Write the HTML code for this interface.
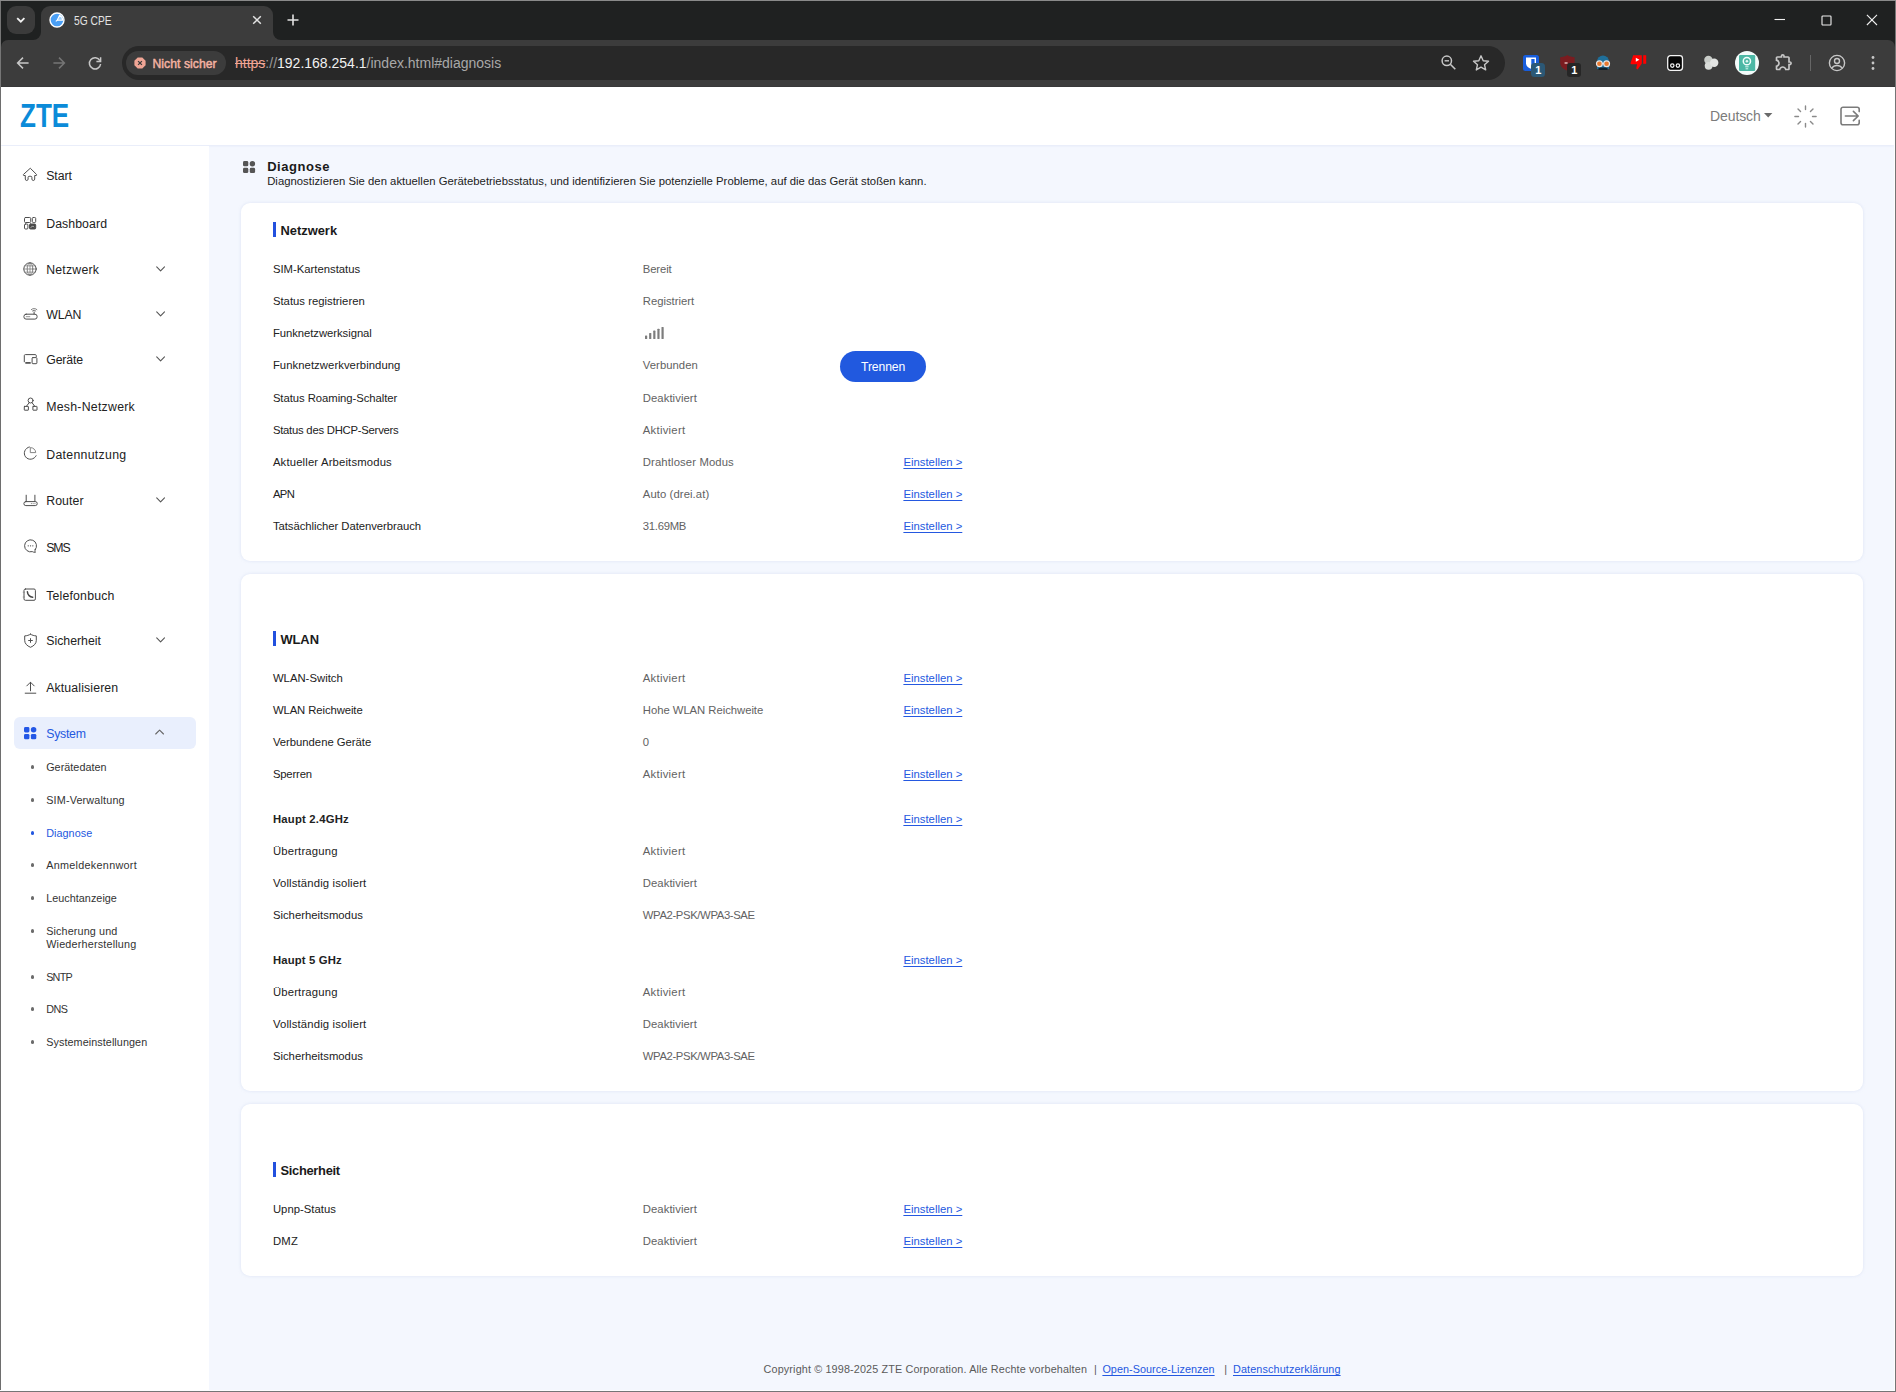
<!DOCTYPE html>
<html lang="de">
<head>
<meta charset="utf-8">
<title>5G CPE</title>
<style>

*{box-sizing:border-box;margin:0;padding:0}
html,body{width:1896px;height:1392px;overflow:hidden;background:#f4f7fe}
body{font-family:"Liberation Sans",sans-serif;color:#222}
#win{position:relative;width:1896px;height:1392px;overflow:hidden;background:#f4f7fe}
.t{position:absolute;white-space:nowrap;line-height:16px;height:16px}
.abs{position:absolute}
svg{position:absolute;overflow:visible}
a{color:inherit}
/* browser chrome */
#tabstrip{position:absolute;left:0;top:0;width:1896px;height:60px;background:#1f2121}
#toolbar{position:absolute;left:1px;top:40px;width:1894px;height:47px;background:#3c3c3c;border-radius:7px 7px 0 0;border-bottom:1px solid #343434}
#tab{position:absolute;left:41px;top:6px;width:232px;height:35px;background:#3c3c3c;border-radius:9px 9px 0 0}
.tabfoot{position:absolute;top:32px;width:8px;height:8px;background:#3c3c3c;overflow:hidden}
.tabfoot i{position:absolute;width:16px;height:16px;border-radius:8px;background:#1f2121;top:-8px}
#tabsearch{position:absolute;left:7px;top:6px;width:28px;height:28px;border-radius:9px;background:#3b3b3b}
#omni{position:absolute;left:122px;top:46px;width:1383px;height:34px;border-radius:17px;background:#282828}
#chip{position:absolute;left:126px;top:51px;width:100px;height:24px;border-radius:12px;background:#3c3c3c}
/* page */
#header{position:absolute;left:1px;top:87px;width:1893px;height:58px;background:#fff;box-shadow:0 1px 2px rgba(205,216,240,.4)}
#side{position:absolute;left:1px;top:146px;width:208px;height:1244px;background:#fff}
.card{position:absolute;left:241px;width:1622px;background:#fff;border-radius:9px;box-shadow:0 0 3px rgba(196,208,236,.5)}
.m{color:#222}
.sub{color:#333}
.lab{color:#222}
.val{color:#626262}
.lnk{color:#2458e0;text-decoration:underline;text-underline-offset:1.5px;text-decoration-thickness:1px}
.blue{color:#2458e0}
.b{font-weight:700}
.bar{position:absolute;left:273px;width:3px;height:14px;background:#2250de}
</style>
</head>
<body>
<div id="win">
<div id="tabstrip"></div>
<div class="abs" style="left:0;top:0;width:1896px;height:1px;background:#8a8a8a"></div>
<div id="tabsearch"></div>
<svg style="left:7px;top:6px" width="28" height="28" viewBox="0 0 28 28"><path d="M10.200 12.100l3.600 3.600 3.600-3.600" fill="none" stroke="#f0f0f0" stroke-width="1.800"/></svg>
<div id="tab"></div>
<div class="tabfoot" style="left:33px"><i style="left:-8px"></i></div>
<div class="tabfoot" style="left:273px"><i style="left:0"></i></div>
<svg style="left:49px;top:12px" width="16" height="16" viewBox="0 0 16 16"><circle cx="8" cy="8" r="7" fill="#4a9ff5" stroke="#fff" stroke-width="1.4"/><path d="M8.2 8.3L10.6 3.2A5.6 5.6 0 0 1 13.6 8.3Z" fill="#9fd0ff" stroke="#fff" stroke-width="1.1" stroke-linejoin="round"/><path d="M6.8 9.4l1.6-1.3" stroke="#fff" stroke-width="1.1"/></svg>
<div class="t " style="left:73.7px;top:13px;font-size:12.3px;transform:scaleX(0.8334);transform-origin:0 0;color:#e3e3e3;">5G CPE</div><svg style="left:252px;top:15px" width="10" height="10" viewBox="0 0 10 10"><path d="M1.2 1.2l7.6 7.6M8.8 1.2l-7.6 7.6" stroke="#e3e3e3" stroke-width="1.5" fill="none"/></svg>
<svg style="left:287px;top:14px" width="12" height="12" viewBox="0 0 12 12"><path d="M6 0.5v11M0.5 6h11" stroke="#e3e3e3" stroke-width="1.6" fill="none"/></svg>
<svg style="left:1774px;top:14px" width="12" height="12" viewBox="0 0 12 12"><path d="M0.5 5.5h10.5" stroke="#f0f0f0" stroke-width="1.1" fill="none"/></svg>
<svg style="left:1820.550px;top:14.550px" width="12" height="12" viewBox="0 0 12 12"><rect x="1" y="1" width="9" height="9" rx=".8" stroke="#f0f0f0" stroke-width="1.100" fill="none"/></svg>
<svg style="left:1866px;top:14.100px" width="12" height="12" viewBox="0 0 12 12"><path d="M0.900 0.900l10.100 10.100M11 0.900l-10.100 10.100" stroke="#f0f0f0" stroke-width="1.1" fill="none"/></svg>
<div id="toolbar"></div>
<div class="abs" style="left:0;top:1px;width:1px;height:86px;background:#767676"></div>
<div class="abs" style="left:1895px;top:1px;width:1px;height:86px;background:#767676"></div>
<svg style="left:16px;top:56px" width="14" height="14" viewBox="0 0 14 14"><path d="M12.6 7H2M7 1.6L1.6 7 7 12.4" fill="none" stroke="#c7c7c7" stroke-width="1.5" stroke-linejoin="miter"/></svg>
<svg style="left:52px;top:56px" width="14" height="14" viewBox="0 0 14 14"><path d="M1.4 7H12M7 1.6L12.4 7 7 12.4" fill="none" stroke="#757575" stroke-width="1.5"/></svg>
<svg style="left:88px;top:56px" width="14" height="14" viewBox="0 0 14 14"><path d="M11.9 4.6A5.6 5.6 0 1 0 12.6 8" fill="none" stroke="#c7c7c7" stroke-width="1.5"/><path d="M12.6 1.2v4.2H8.4" fill="none" stroke="#c7c7c7" stroke-width="1.5"/></svg>
<div id="omni"></div><div id="chip"></div>
<svg style="left:134px;top:57px" width="12" height="12" viewBox="0 0 12 12"><path d="M3.7 0.4h4.6l3.3 3.3v4.6l-3.3 3.3H3.7L0.4 8.3V3.7Z" fill="#f0a595"/><path d="M4.1 4.1l3.8 3.8M7.9 4.1l-3.8 3.8" stroke="#3c3c3c" stroke-width="1.3"/></svg>
<div class="t " style="left:152.5px;top:55.5px;font-size:12.2px;letter-spacing:0.043px;color:#f5b3a3;-webkit-text-stroke:.45px #f5b3a3;">Nicht sicher</div><div class="t " style="left:235px;top:55px;font-size:14px;"><span style="color:#f0a595;text-decoration:line-through">https</span><span style="color:#9a9a9a">://</span><span style="color:#f1f1f1">192.168.254.1</span><span style="color:#a8a8a8">/index.html#diagnosis</span></div><svg style="left:1440px;top:54px" width="18" height="18" viewBox="0 0 18 18"><circle cx="6.8" cy="6.8" r="4.7" fill="none" stroke="#c7c7c7" stroke-width="1.5"/><path d="M10.3 10.3l5 5" stroke="#c7c7c7" stroke-width="1.6"/><path d="M4.6 6.8h4.4" stroke="#c7c7c7" stroke-width="1.4"/></svg>
<svg style="left:1472px;top:54px" width="18" height="18" viewBox="0 0 18 18"><path d="M9 1.8l2.2 4.9 5.3.5-4 3.5 1.2 5.2L9 13.2l-4.7 2.7 1.2-5.2-4-3.5 5.3-.5Z" fill="none" stroke="#c7c7c7" stroke-width="1.4" stroke-linejoin="round"/></svg>
<svg style="left:1523px;top:55px" width="24" height="24" viewBox="0 0 24 24"><rect x="0" y="0" width="16" height="16" rx="2.5" fill="#175ddc"/><path d="M3 2.6h10v5.6c0 2.8-2.4 4.6-5 5.6-2.6-1-5-2.8-5-5.6Z" fill="#fff"/><path d="M8.300 4h3.300v4.200c0 1.900-1.500 3.200-3.300 4Z" fill="#175ddc"/><rect x="8" y="8" width="14" height="14" rx="3.5" fill="#2b5876"/></svg>
<div class="t b" style="left:1535.3px;top:62px;font-size:11px;color:#fff;">1</div><svg style="left:1559px;top:54px" width="24" height="24" viewBox="0 0 24 24"><path d="M8.4 1c2 1.4 4.4 2 7.2 2.2v5.6c0 3.6-3 6.4-7.2 8-4.200-1.6-7.2-4.4-7.2-8V3.200C4 3 6.400 2.400 8.400 1Z" fill="#7a1c20"/><path d="M5.600 9h3" stroke="#d9b0b0" stroke-width="1.6"/><rect x="8" y="9" width="14" height="14" rx="3" fill="#262626"/></svg>
<div class="t b" style="left:1571.3px;top:62px;font-size:11px;color:#fff;">1</div><svg style="left:1594px;top:54px" width="18" height="18" viewBox="0 0 18 18"><path d="M3 7.500a6 6 0 0 1 12 0v7.500h-12Z" fill="#1f6f9a"/><path d="M4.500 13.500h9v2.500h-9Z" fill="#10202a"/><circle cx="5.400" cy="9.800" r="2.900" fill="#e8792f" stroke="#e6e6e6" stroke-width="1.200"/><circle cx="12.600" cy="9.800" r="2.900" fill="#e8792f" stroke="#e6e6e6" stroke-width="1.200"/><path d="M8.200 9.600h1.600" stroke="#e6e6e6" stroke-width="1.100"/></svg>
<svg style="left:1630px;top:54px" width="18" height="18" viewBox="0 0 18 18"><path d="M3.200 1.200h8.600v8.400l-4.200 5.800-1.400-1 .9-4.200H1.400c-.6 0-1-.5-.8-1.100Z" fill="#f00"/><rect x="13.200" y="1.200" width="3" height="8.600" fill="#f00"/><path d="M5.800 3.700l3.600 2-3.600 2Z" fill="#fff"/></svg>
<svg style="left:1667px;top:55px" width="17" height="17" viewBox="0 0 17 17"><rect x=".7" y=".7" width="14.800" height="14.600" rx="2.800" fill="#050505" stroke="#f4f4f4" stroke-width="1.300"/><circle cx="5.300" cy="10.600" r="1.700" fill="none" stroke="#f4f4f4" stroke-width="1.200"/><circle cx="10.900" cy="10.600" r="1.700" fill="none" stroke="#f4f4f4" stroke-width="1.200"/></svg>
<svg style="left:1702px;top:54px" width="18" height="18" viewBox="0 0 18 18"><circle cx="6.400" cy="6" r="4.200" fill="#c9cdc9"/><circle cx="6.600" cy="11.800" r="3.900" fill="#d9dcd9"/><circle cx="12.200" cy="8.800" r="4.200" fill="#e3e5e3"/></svg>
<svg style="left:1735px;top:51px" width="24" height="24" viewBox="0 0 24 24"><circle cx="12" cy="12" r="12" fill="#f3fbfa"/><rect x="4" y="4" width="16.200" height="16" rx="1.200" fill="#4cb8a5"/><circle cx="11.900" cy="10.200" r="3.600" fill="none" stroke="#f2fffc" stroke-width="1.500"/><circle cx="11.900" cy="10.200" r="1.300" fill="#dff5f0"/><path d="M10.200 15.800h3.400M10.600 17.800h2.600" stroke="#e6faf6" stroke-width=".9"/></svg>
<svg style="left:1774.200px;top:51.800px" width="20" height="20" viewBox="0 0 24 24"><path fill="#c7c7c7" d="M10.500 4.500c.28 0 .5.22.5.5v2h6v6h2c.28 0 .5.22.5.5s-.22.5-.5.5h-2v6h-2.120c-.68-1.750-2.390-3-4.380-3s-3.700 1.250-4.380 3H4v-2.120c1.750-.68 3-2.390 3-4.380 0-1.990-1.240-3.700-2.990-4.380L4 7h6V5c0-.28.22-.5.5-.5m0-2C9.120 2.500 8 3.620 8 5H4c-1.100 0-1.990.9-1.990 2v3.800h.29c1.490 0 2.700 1.210 2.700 2.700s-1.210 2.700-2.700 2.700H2V20c0 1.100.9 2 2 2h3.800v-.3c0-1.490 1.210-2.700 2.700-2.700s2.700 1.210 2.700 2.700v.3H17c1.100 0 2-.9 2-2v-4c1.380 0 2.500-1.120 2.500-2.500S20.380 11 19 11V7c0-1.100-.9-2-2-2h-4c0-1.380-1.120-2.500-2.500-2.500z"/></svg>
<div class="abs" style="left:1809.600px;top:55px;width:1.200px;height:16px;background:#666"></div>
<svg style="left:1828px;top:54px" width="18" height="18" viewBox="0 0 18 18"><circle cx="9" cy="9" r="7.600" fill="none" stroke="#c7c7c7" stroke-width="1.400"/><circle cx="9" cy="7" r="2.500" fill="none" stroke="#c7c7c7" stroke-width="1.400"/><path d="M3.800 14.200c1.300-2 3.200-2.700 5.200-2.700s3.900.7 5.200 2.700" fill="none" stroke="#c7c7c7" stroke-width="1.400"/></svg>
<svg style="left:1871px;top:55px" width="4" height="16" viewBox="0 0 4 16"><circle cx="2" cy="2.500" r="1.400" fill="#c7c7c7"/><circle cx="2" cy="8" r="1.400" fill="#c7c7c7"/><circle cx="2" cy="13.500" r="1.400" fill="#c7c7c7"/></svg>
<div id="header"></div>
<div id="side"></div>
<div class="abs" style="left:0;top:87px;width:1px;height:1305px;background:#6e6e6e"></div>
<div class="abs" style="left:1894px;top:87px;width:1px;height:1304px;background:#fdfdfe"></div><div class="abs" style="left:1895px;top:87px;width:1px;height:1305px;background:#757575"></div>
<div class="abs" style="left:0;top:1390px;width:1895px;height:1px;background:#fdfdfe"></div><div class="abs" style="left:0;top:1391px;width:1896px;height:1px;background:#757575"></div>
<div class="t b" style="left:19.5px;top:96px;height:40px;line-height:40px;font-size:33.6px;color:#0b8bd9;transform:scaleX(.775);transform-origin:0 0;letter-spacing:0px">ZTE</div>
<div class="t " style="left:1710px;top:108px;font-size:14px;letter-spacing:-0.093px;color:#7b7b7b;">Deutsch</div><svg style="left:1764px;top:113px" width="8.4" height="4.4" viewBox="0 0 8.4 4.4"><path d="M0 0h8.400L4.200 4.400Z" fill="#6a6a6a"/></svg>
<svg style="left:1793.8px;top:104.5px" width="23" height="23" viewBox="0 0 23 23" fill="none" stroke="#8a8a8a" stroke-width="1.4" stroke-linecap="round"><path d="M11.50 4.50L11.50 0.90"/><path d="M16.45 6.55L19.00 4.00"/><path d="M18.50 11.50L22.10 11.50"/><path d="M16.45 16.45L19.00 19.00"/><path d="M11.50 18.50L11.50 22.10"/><path d="M6.55 16.45L4.00 19.00"/><path d="M4.50 11.50L0.90 11.50"/><path d="M6.55 6.55L4.00 4.00"/></svg>
<svg style="left:1840px;top:106px" width="21" height="21" viewBox="0 0 21 21" fill="none" stroke="#7b7b7b" stroke-width="1.6" stroke-linecap="round" stroke-linejoin="round"><path d="M19.200 5.600V3.200a2 2 0 0 0-2-2H3a2 2 0 0 0-2 2v13.600a2 2 0 0 0 2 2h14.200a2 2 0 0 0 2-2v-2.400"/><path d="M5.400 10h12.600M13.400 5.400L18.200 10l-4.800 4.600"/></svg>
<div class="t m" style="left:46.2px;top:168px;font-size:12.3px;letter-spacing:-0.069px;">Start</div><div class="t m" style="left:46.2px;top:216px;font-size:12.3px;letter-spacing:0.078px;">Dashboard</div><div class="t m" style="left:46.2px;top:262px;font-size:12.3px;letter-spacing:0.220px;">Netzwerk</div><svg style="left:155.7px;top:265.5px" width="9.2" height="6" viewBox="0 0 9.2 6" fill="none" stroke="#555" stroke-width="1.1" stroke-linecap="round" stroke-linejoin="round"><path d="M0.7 0.9l3.9 3.9 3.9-3.9"/></svg>
<div class="t m" style="left:46.2px;top:307px;font-size:12.3px;letter-spacing:-0.079px;">WLAN</div><svg style="left:155.7px;top:310.5px" width="9.2" height="6" viewBox="0 0 9.2 6" fill="none" stroke="#555" stroke-width="1.1" stroke-linecap="round" stroke-linejoin="round"><path d="M0.7 0.9l3.9 3.9 3.9-3.9"/></svg>
<div class="t m" style="left:46.2px;top:352px;font-size:12.3px;letter-spacing:-0.121px;">Geräte</div><svg style="left:155.7px;top:355.5px" width="9.2" height="6" viewBox="0 0 9.2 6" fill="none" stroke="#555" stroke-width="1.1" stroke-linecap="round" stroke-linejoin="round"><path d="M0.7 0.9l3.9 3.9 3.9-3.9"/></svg>
<div class="t m" style="left:46.2px;top:399px;font-size:12.3px;letter-spacing:0.264px;">Mesh-Netzwerk</div><div class="t m" style="left:46.2px;top:447px;font-size:12.3px;letter-spacing:0.310px;">Datennutzung</div><div class="t m" style="left:46.2px;top:493px;font-size:12.3px;letter-spacing:0.096px;">Router</div><svg style="left:155.7px;top:496.5px" width="9.2" height="6" viewBox="0 0 9.2 6" fill="none" stroke="#555" stroke-width="1.1" stroke-linecap="round" stroke-linejoin="round"><path d="M0.7 0.9l3.9 3.9 3.9-3.9"/></svg>
<div class="t m" style="left:46.2px;top:540px;font-size:12.3px;letter-spacing:-1.078px;">SMS</div><div class="t m" style="left:46.2px;top:588px;font-size:12.3px;letter-spacing:0.186px;">Telefonbuch</div><div class="t m" style="left:46.2px;top:633px;font-size:12.3px;letter-spacing:0.011px;">Sicherheit</div><svg style="left:155.7px;top:636.5px" width="9.2" height="6" viewBox="0 0 9.2 6" fill="none" stroke="#555" stroke-width="1.1" stroke-linecap="round" stroke-linejoin="round"><path d="M0.7 0.9l3.9 3.9 3.9-3.9"/></svg>
<div class="t m" style="left:46.2px;top:680px;font-size:12.3px;letter-spacing:0.132px;">Aktualisieren</div><svg style="left:22px;top:167px" width="16" height="15" viewBox="0 0 16 15" fill="none" stroke="#4e4e4e" stroke-width="1" stroke-linecap="round" stroke-linejoin="round"><path d="M8 1.5L1.500 7.400c-.5.500-.2 1.100.4 1.100H3.300v3.600c0 .9.600 1.400 1.400 1.400s1.400-.5 1.400-1.400V10.300c0-.6.400-1 1-1h1.800c.6 0 1 .4 1 1v1.800c0 .9.600 1.400 1.400 1.400s1.400-.5 1.400-1.400V8.500h1.400c.6 0 .9-.6.400-1.100Z"/></svg>
<svg style="left:23px;top:216px" width="14" height="14" viewBox="0 0 14 14" fill="none" stroke="#4e4e4e" stroke-width="1" stroke-linecap="round" stroke-linejoin="round"><rect x="1.500" y="1.500" width="6.200" height="5" rx="1"/><rect x="9.300" y="1.500" width="3.400" height="5" rx="1"/><rect x="1.500" y="8" width="3.400" height="5" rx="1"/><rect x="6.500" y="8" width="6.200" height="5" rx="1" fill="#474747"/><path d="M8 11.500l1.600-1.600 1 1" stroke="#ddd" stroke-width=".8"/></svg>
<svg style="left:23px;top:262px" width="14" height="14" viewBox="0 0 14 14" fill="none" stroke="#4e4e4e" stroke-width="1" stroke-linecap="round" stroke-linejoin="round"><circle cx="7" cy="7" r="6.200"/><ellipse cx="7" cy="7" rx="2.800" ry="6.200" stroke-width=".8" stroke="#666"/><path d="M0.800 7h12.400M7 .8v12.400M1.900 3.900h10.200M1.900 10.100h10.200" stroke-width=".75" stroke="#777"/></svg>
<svg style="left:22.5px;top:307px" width="15" height="13.5" viewBox="0 0 15 13.5" fill="none" stroke="#4e4e4e" stroke-width="1" stroke-linecap="round" stroke-linejoin="round"><rect x=".9" y="7.200" width="13.200" height="4.900" rx="2.200"/><path d="M11.100 7.200V4.900"/><path d="M9.400 3.900a2.500 2.500 0 0 1 3.400 0M8.300 2.600a4 4 0 0 1 5.600 0" stroke-width=".85" stroke="#666"/><path d="M3.200 9.700h3.600" stroke-width=".9" stroke="#888"/></svg>
<svg style="left:22.5px;top:353px" width="15" height="12" viewBox="0 0 15 12" fill="none" stroke="#4e4e4e" stroke-width="1" stroke-linecap="round" stroke-linejoin="round"><path d="M1.300 8.800V2.600c0-.6.400-1 1-1h10c.6 0 1 .4 1 1v.9"/><rect x="9.100" y="4.600" width="4.800" height="6.100" rx=".8"/><path d="M2.300 9.900h5.400" stroke-width="1.700" stroke-linecap="butt"/></svg>
<svg style="left:22.5px;top:397.3px" width="15" height="14.5" viewBox="0 0 15 14.5" fill="none" stroke="#4e4e4e" stroke-width="1" stroke-linecap="round" stroke-linejoin="round"><circle cx="7.600" cy="3.500" r="2.500"/><path d="M6.200 5.700L3.600 9M9 5.700L11.600 9"/><rect x="1.300" y="9.400" width="4.100" height="3.800" rx=".3" stroke-linejoin="miter"/><rect x="9.900" y="9.400" width="4.100" height="3.800" rx=".3" stroke-linejoin="miter"/></svg>
<svg style="left:22.5px;top:446.3px" width="15" height="14.5" viewBox="0 0 15 14.5" fill="none" stroke="#4e4e4e" stroke-width="1" stroke-linecap="round" stroke-linejoin="round"><path d="M6.420 1A6.200 6.200 0 1 0 13.120 9.720"/><path d="M7.700 1.600A5 5 0 0 1 12.700 6.600H7.700Z" stroke="#777" stroke-width=".9"/></svg>
<svg style="left:22.5px;top:493.5px" width="15" height="12.5" viewBox="0 0 15 12.5" fill="none" stroke="#4e4e4e" stroke-width="1" stroke-linecap="round" stroke-linejoin="round"><rect x=".9" y="7.600" width="13.300" height="4" rx="1.900"/><path d="M3.200 7.600V1.200M11.900 7.600V1.200"/><path d="M8.300 9.600h.1M10.100 9.600h.1M11.900 9.600h.1" stroke-width="1" stroke="#777"/></svg>
<svg style="left:22.5px;top:539.3px" width="15" height="14" viewBox="0 0 15 14" fill="none" stroke="#4e4e4e" stroke-width="1" stroke-linecap="round" stroke-linejoin="round"><path d="M12.200 10.700A6 6 0 1 0 9.300 12.600c.8.500 1.800.8 3.100.7-.5-.7-.6-1.700-.2-2.600Z"/><path d="M5.200 6.800h.1M7.500 6.800h.1M9.800 6.800h.1" stroke-width="1.200"/></svg>
<svg style="left:22.2px;top:587.7px" width="15" height="13.5" viewBox="0 0 15 13.5" fill="none" stroke="#4e4e4e" stroke-width="1" stroke-linecap="round" stroke-linejoin="round"><rect x="2" y="1" width="11.400" height="11.300" rx="1.400"/><path d="M1.200 4.200h1.400M1.200 9h1.400" stroke-width=".9" stroke="#888"/><path d="M5.400 3.700c.1 1.600.7 2.900 1.700 3.900s2.200 1.500 3.600 1.600" stroke-width="1.500" stroke="#444"/></svg>
<svg style="left:22.5px;top:632.5px" width="15" height="15.5" viewBox="0 0 15 15.5" fill="none" stroke="#4e4e4e" stroke-width="1" stroke-linecap="round" stroke-linejoin="round"><path d="M7.500 1.200c1.600 1 3.600 1.600 5.800 1.700v4.500c0 3.100-2.200 5.400-5.800 6.900-3.600-1.500-5.800-3.800-5.800-6.900V2.900c2.200-.1 4.200-.7 5.800-1.700Z"/><path d="M7.500 5.600v3.800M5.600 7.500h3.800" stroke-width="1"/></svg>
<svg style="left:22.5px;top:680.5px" width="15" height="13.5" viewBox="0 0 15 13.5" fill="none" stroke="#4e4e4e" stroke-width="1" stroke-linecap="round" stroke-linejoin="round"><path d="M7.500 9.800V1.300M3.800 4.900L7.500 1.200l3.700 3.700M2.200 12.200h10.600"/></svg>
<div class="abs" style="left:14px;top:717px;width:182px;height:32px;border-radius:6px;background:#e9effd"></div>
<svg style="left:23.800px;top:727px" width="12.400" height="12.400" viewBox="0 0 12.400 12.400"><rect x="0" y="0" width="5.400" height="5.400" rx="1.400" fill="#2357e6"/><circle cx="9.600" cy="2.700" r="2.750" fill="#2357e6"/><rect x="0" y="6.900" width="5.400" height="5.400" rx="1.400" fill="#2357e6"/><rect x="6.900" y="6.900" width="5.400" height="5.400" rx="1.400" fill="#2357e6"/></svg>
<div class="t blue" style="left:46.2px;top:726px;font-size:12.3px;letter-spacing:-0.262px;">System</div><svg style="left:154.9px;top:729px" width="9.2" height="6" viewBox="0 0 9.2 6" fill="none" stroke="#666" stroke-width="1.1" stroke-linecap="round" stroke-linejoin="round"><path d="M0.7 5l3.9-3.9 3.9 3.9"/></svg>
<div class="abs" style="left:30.600px;top:765.2px;width:3.600px;height:3.600px;border-radius:2px;background:#6b6b6b"></div><div class="t sub" style="left:46.2px;top:759px;font-size:10.8px;letter-spacing:0.036px;">Gerätedaten</div><div class="abs" style="left:30.600px;top:798.2px;width:3.600px;height:3.600px;border-radius:2px;background:#6b6b6b"></div><div class="t sub" style="left:46.2px;top:792px;font-size:10.8px;letter-spacing:0.166px;">SIM-Verwaltung</div><div class="abs" style="left:30.600px;top:831.2px;width:3.600px;height:3.600px;border-radius:2px;background:#2458e0"></div><div class="t blue" style="left:46.2px;top:825px;font-size:10.8px;letter-spacing:0.052px;">Diagnose</div><div class="abs" style="left:30.600px;top:863.2px;width:3.600px;height:3.600px;border-radius:2px;background:#6b6b6b"></div><div class="t sub" style="left:46.2px;top:857px;font-size:10.8px;letter-spacing:0.296px;">Anmeldekennwort</div><div class="abs" style="left:30.600px;top:896.2px;width:3.600px;height:3.600px;border-radius:2px;background:#6b6b6b"></div><div class="t sub" style="left:46.2px;top:890px;font-size:10.8px;letter-spacing:0.037px;">Leuchtanzeige</div><div class="abs" style="left:30.600px;top:929.2px;width:3.600px;height:3.600px;border-radius:2px;background:#6b6b6b"></div><div class="t sub" style="left:46.2px;top:923px;font-size:10.8px;letter-spacing:0.129px;">Sicherung und</div><div class="abs" style="left:30.600px;top:975.2px;width:3.600px;height:3.600px;border-radius:2px;background:#6b6b6b"></div><div class="t sub" style="left:46.2px;top:969px;font-size:10.8px;letter-spacing:-0.768px;">SNTP</div><div class="abs" style="left:30.600px;top:1007.2px;width:3.600px;height:3.600px;border-radius:2px;background:#6b6b6b"></div><div class="t sub" style="left:46.2px;top:1001px;font-size:10.8px;letter-spacing:-0.502px;">DNS</div><div class="abs" style="left:30.600px;top:1040.2px;width:3.600px;height:3.600px;border-radius:2px;background:#6b6b6b"></div><div class="t sub" style="left:46.2px;top:1034px;font-size:10.8px;letter-spacing:0.074px;">Systemeinstellungen</div><div class="t sub" style="left:46.2px;top:936px;font-size:10.8px;letter-spacing:0.191px;">Wiederherstellung</div><svg style="left:243px;top:161px" width="12.200" height="12.200" viewBox="0 0 12.200 12.200"><rect x="0" y="0" width="5.300" height="5.300" rx="1.400" fill="#555"/><circle cx="9.400" cy="2.700" r="2.700" fill="#555"/><rect x="0" y="6.800" width="5.300" height="5.300" rx="1.400" fill="#555"/><rect x="6.800" y="6.800" width="5.300" height="5.300" rx="1.400" fill="#555"/></svg>
<div class="t b" style="left:267.2px;top:158.5px;font-size:13px;letter-spacing:0.527px;color:#1a1a1a;">Diagnose</div><div class="t lab" style="left:267.2px;top:173px;font-size:11.3px;letter-spacing:0.019px;">Diagnostizieren Sie den aktuellen Gerätebetriebsstatus, und identifizieren Sie potenzielle Probleme, auf die das Gerät stoßen kann.</div><div class="card" style="top:203px;height:358px"></div>
<div class="card" style="top:574px;height:517px"></div>
<div class="card" style="top:1104px;height:172px"></div>
<div class="bar" style="top:222px;height:15px"></div><div class="t b" style="left:280.4px;top:222.5px;font-size:12.9px;letter-spacing:0.009px;color:#1a1a1a;">Netzwerk</div><div class="t lab" style="left:272.9px;top:261px;font-size:11.3px;">SIM-Kartenstatus</div><div class="t val" style="left:642.8px;top:261px;font-size:11.3px;letter-spacing:-0.124px;">Bereit</div><div class="t lab" style="left:272.9px;top:293px;font-size:11.3px;letter-spacing:0.011px;">Status registrieren</div><div class="t val" style="left:642.8px;top:293px;font-size:11.3px;letter-spacing:-0.019px;">Registriert</div><div class="t lab" style="left:272.9px;top:325px;font-size:11.3px;letter-spacing:-0.051px;">Funknetzwerksignal</div><svg style="left:644.700px;top:326.600px" width="19" height="12" viewBox="0 0 19 12" fill="#7d7d7d"><rect x="0" y="8.4" width="2.200" height="3.6" rx=".6"/><rect x="4.12" y="5.9" width="2.200" height="6.1" rx=".6"/><rect x="8.24" y="3.6" width="2.200" height="8.4" rx=".6"/><rect x="12.36" y="1.7" width="2.200" height="10.3" rx=".6"/><rect x="16.48" y="0" width="2.200" height="12" rx=".6"/></svg>
<div class="t lab" style="left:272.9px;top:357px;font-size:11.3px;letter-spacing:0.059px;">Funknetzwerkverbindung</div><div class="t val" style="left:642.8px;top:357px;font-size:11.3px;letter-spacing:0.041px;">Verbunden</div><div class="abs" style="left:840px;top:351px;width:86px;height:31px;border-radius:16px;background:#2159df"></div><div class="t " style="left:861px;top:359px;font-size:12.2px;letter-spacing:-0.115px;color:#fff;">Trennen</div><div class="t lab" style="left:272.9px;top:390px;font-size:11.3px;letter-spacing:-0.051px;">Status Roaming-Schalter</div><div class="t val" style="left:642.8px;top:390px;font-size:11.3px;letter-spacing:0.062px;">Deaktiviert</div><div class="t lab" style="left:272.9px;top:422px;font-size:11.3px;letter-spacing:-0.243px;">Status des DHCP-Servers</div><div class="t val" style="left:642.8px;top:422px;font-size:11.3px;letter-spacing:0.264px;">Aktiviert</div><div class="t lab" style="left:272.9px;top:454px;font-size:11.3px;letter-spacing:0.159px;">Aktueller Arbeitsmodus</div><div class="t val" style="left:642.8px;top:454px;font-size:11.3px;letter-spacing:0.121px;">Drahtloser Modus</div><a class="t lnk" style="left:903.4px;top:454px;font-size:11.3px;letter-spacing:0.015px;">Einstellen &gt;</a><div class="t lab" style="left:272.9px;top:486px;font-size:11.3px;letter-spacing:-0.568px;">APN</div><div class="t val" style="left:642.8px;top:486px;font-size:11.3px;letter-spacing:0.083px;">Auto (drei.at)</div><a class="t lnk" style="left:903.4px;top:486px;font-size:11.3px;letter-spacing:0.015px;">Einstellen &gt;</a><div class="t lab" style="left:272.9px;top:518px;font-size:11.3px;letter-spacing:-0.048px;">Tatsächlicher Datenverbrauch</div><div class="t val" style="left:642.8px;top:518px;font-size:11.3px;letter-spacing:-0.272px;">31.69MB</div><a class="t lnk" style="left:903.4px;top:518px;font-size:11.3px;letter-spacing:0.015px;">Einstellen &gt;</a><div class="bar" style="top:631px;height:15px"></div><div class="t b" style="left:280.4px;top:631.5px;font-size:12.9px;letter-spacing:-0.029px;color:#1a1a1a;">WLAN</div><div class="t lab" style="left:272.9px;top:670px;font-size:11.3px;letter-spacing:0.021px;">WLAN-Switch</div><div class="t val" style="left:642.8px;top:670px;font-size:11.3px;letter-spacing:0.264px;">Aktiviert</div><a class="t lnk" style="left:903.4px;top:670px;font-size:11.3px;letter-spacing:0.015px;">Einstellen &gt;</a><div class="t lab" style="left:272.9px;top:702px;font-size:11.3px;letter-spacing:-0.090px;">WLAN Reichweite</div><div class="t val" style="left:642.8px;top:702px;font-size:11.3px;letter-spacing:-0.038px;">Hohe WLAN Reichweite</div><a class="t lnk" style="left:903.4px;top:702px;font-size:11.3px;letter-spacing:0.015px;">Einstellen &gt;</a><div class="t lab" style="left:272.9px;top:734px;font-size:11.3px;letter-spacing:-0.015px;">Verbundene Geräte</div><div class="t val" style="left:642.8px;top:734px;font-size:11.3px;">0</div><div class="t lab" style="left:272.9px;top:766px;font-size:11.3px;letter-spacing:-0.167px;">Sperren</div><div class="t val" style="left:642.8px;top:766px;font-size:11.3px;letter-spacing:0.264px;">Aktiviert</div><a class="t lnk" style="left:903.4px;top:766px;font-size:11.3px;letter-spacing:0.015px;">Einstellen &gt;</a><div class="t lab b" style="left:272.9px;top:811px;font-size:11.3px;letter-spacing:0.222px;">Haupt 2.4GHz</div><a class="t lnk" style="left:903.4px;top:811px;font-size:11.3px;letter-spacing:0.015px;">Einstellen &gt;</a><div class="t lab" style="left:272.9px;top:843px;font-size:11.3px;letter-spacing:0.178px;">Übertragung</div><div class="t val" style="left:642.8px;top:843px;font-size:11.3px;letter-spacing:0.264px;">Aktiviert</div><div class="t lab" style="left:272.9px;top:875px;font-size:11.3px;letter-spacing:0.155px;">Vollständig isoliert</div><div class="t val" style="left:642.8px;top:875px;font-size:11.3px;letter-spacing:0.062px;">Deaktiviert</div><div class="t lab" style="left:272.9px;top:907px;font-size:11.3px;letter-spacing:0.012px;">Sicherheitsmodus</div><div class="t val" style="left:642.8px;top:907px;font-size:11.3px;letter-spacing:-0.373px;">WPA2-PSK/WPA3-SAE</div><div class="t lab b" style="left:272.9px;top:952px;font-size:11.3px;letter-spacing:0.172px;">Haupt 5 GHz</div><a class="t lnk" style="left:903.4px;top:952px;font-size:11.3px;letter-spacing:0.015px;">Einstellen &gt;</a><div class="t lab" style="left:272.9px;top:984px;font-size:11.3px;letter-spacing:0.178px;">Übertragung</div><div class="t val" style="left:642.8px;top:984px;font-size:11.3px;letter-spacing:0.264px;">Aktiviert</div><div class="t lab" style="left:272.9px;top:1016px;font-size:11.3px;letter-spacing:0.155px;">Vollständig isoliert</div><div class="t val" style="left:642.8px;top:1016px;font-size:11.3px;letter-spacing:0.062px;">Deaktiviert</div><div class="t lab" style="left:272.9px;top:1048px;font-size:11.3px;letter-spacing:0.012px;">Sicherheitsmodus</div><div class="t val" style="left:642.8px;top:1048px;font-size:11.3px;letter-spacing:-0.373px;">WPA2-PSK/WPA3-SAE</div><div class="bar" style="top:1162px;height:15px"></div><div class="t b" style="left:280.4px;top:1162.5px;font-size:12.9px;letter-spacing:-0.286px;color:#1a1a1a;">Sicherheit</div><div class="t lab" style="left:272.9px;top:1201px;font-size:11.3px;letter-spacing:0.029px;">Upnp-Status</div><div class="t val" style="left:642.8px;top:1201px;font-size:11.3px;letter-spacing:0.062px;">Deaktiviert</div><a class="t lnk" style="left:903.4px;top:1201px;font-size:11.3px;letter-spacing:0.015px;">Einstellen &gt;</a><div class="t lab" style="left:272.9px;top:1233px;font-size:11.3px;letter-spacing:0.212px;">DMZ</div><div class="t val" style="left:642.8px;top:1233px;font-size:11.3px;letter-spacing:0.062px;">Deaktiviert</div><a class="t lnk" style="left:903.4px;top:1233px;font-size:11.3px;letter-spacing:0.015px;">Einstellen &gt;</a><div class="t " style="left:763.6px;top:1361px;font-size:10.8px;letter-spacing:0.142px;color:#5a5a5a;">Copyright © 1998-2025 ZTE Corporation. Alle Rechte vorbehalten</div><div class="t " style="left:1094px;top:1361px;font-size:10.8px;color:#5a5a5a;">|</div><a class="t lnk" style="left:1102.4px;top:1361px;font-size:10.8px;letter-spacing:0.060px;">Open-Source-Lizenzen</a><div class="t " style="left:1224.3px;top:1361px;font-size:10.8px;color:#5a5a5a;">|</div><a class="t lnk" style="left:1233px;top:1361px;font-size:10.8px;letter-spacing:0.128px;">Datenschutzerklärung</a></div>
</body>
</html>
